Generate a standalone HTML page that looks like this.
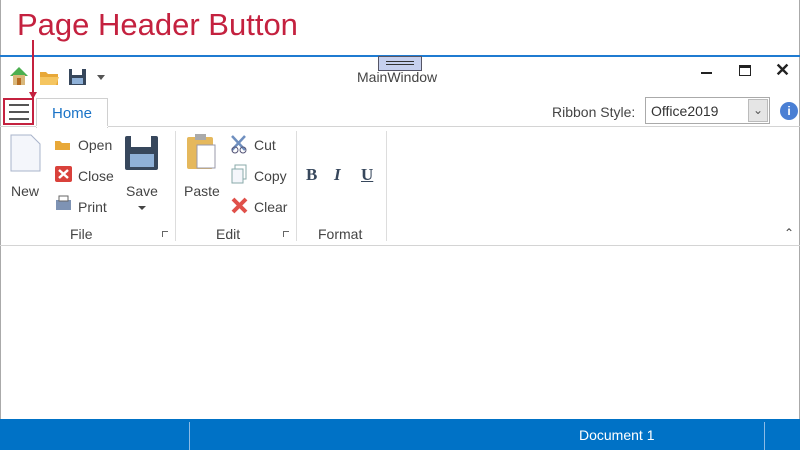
<!DOCTYPE html>
<html><head><style>
*{margin:0;padding:0;box-sizing:border-box}
body{width:800px;height:450px;position:relative;background:#fff;font-family:"Liberation Sans",sans-serif;overflow:hidden;color:#333}
.a{position:absolute}
.t{font-size:14px;color:#444}
</style></head><body>
<div class="a" style="left:0;top:0;width:800px;height:450px;border-left:1px solid #aaa;border-right:1px solid #aaa"></div>
<div class="a" style="left:17px;top:7px;font-size:31px;color:#c4213f">Page Header Button</div>
<div class="a" style="left:0;top:55px;width:800px;height:2px;background:#1f7bd1"></div>
<div class="a" style="left:32px;top:40px;width:2px;height:58px;background:#c4213f"></div>
<div class="a" style="left:29px;top:92px;border-left:4px solid transparent;border-right:4px solid transparent;border-top:7px solid #c4213f"></div>
<div class="a" style="left:378px;top:56px;width:44px;height:15px;background:#c6d0ee;border:1px solid #556"></div>
<div class="a" style="left:386px;top:61px;width:28px;height:1px;background:#333;box-shadow:0 3px 0 #333"></div>
<svg class="a" style="left:8px;top:64px" width="100" height="24">
<path d="M2 12 L11 3 L20 12 Z" fill="#4caf50"/><rect x="5" y="11" width="12" height="10" fill="#d9b77a"/><rect x="9" y="14" width="4" height="7" fill="#b56b20"/>
<path d="M32 8h6l2 2h10v11H32z" fill="#e8a838"/><path d="M32 13h19l-3 8H32z" fill="#f5c560"/>
<rect x="61" y="5" width="17" height="16" fill="#37475c"/><rect x="64" y="5" width="10" height="6" fill="#fff"/><rect x="64" y="14" width="11" height="6" fill="#8fb1d8"/>
<path d="M89 11h8l-4 5z" fill="#555"/>
</svg>
<div class="a" style="left:357px;top:69px;font-size:14px;color:#444">MainWindow</div>
<div class="a" style="left:701px;top:72px;width:11px;height:2px;background:#222"></div>
<div class="a" style="left:739px;top:65px;width:12px;height:11px;border:1.5px solid #222;border-top-width:3px"></div>
<div class="a" style="left:775px;top:60px;font-size:18px;font-weight:bold;color:#222">✕</div>
<div class="a" style="left:3px;top:98px;width:31px;height:27px;border:2px solid #c4213f"></div>
<div class="a" style="left:9px;top:104px;width:20px;height:2px;background:#555;box-shadow:0 7px 0 #555,0 14px 0 #555"></div>
<div class="a" style="left:36px;top:98px;width:72px;height:30px;border:1px solid #d0d0d0;border-bottom:none;background:#fff"></div>
<div class="a" style="left:52px;top:105px;font-size:15px;color:#1a73c7">Home</div>
<div class="a" style="left:0;top:126px;width:800px;height:1px;background:#d4d4d4"></div>
<div class="a" style="left:36px;top:126px;width:72px;height:1px;background:#fff"></div>
<div class="a t" style="left:552px;top:104px">Ribbon Style:</div>
<div class="a" style="left:645px;top:97px;width:125px;height:27px;border:1px solid #aaa"></div>
<div class="a t" style="left:651px;top:103px;color:#333">Office2019</div>
<div class="a" style="left:748px;top:99px;width:20px;height:23px;background:#e5e5e5;border:1px solid #bbb;font-size:12px;text-align:center;line-height:20px;color:#555">⌄</div>
<div class="a" style="left:780px;top:102px;width:18px;height:18px;border-radius:50%;background:#4a7fd4;color:#fff;font-size:12px;font-weight:bold;text-align:center;line-height:18px">i</div>
<svg class="a" style="left:8px;top:132px" width="380" height="90">
<path d="M3 3h20l9 9v27H3z" fill="#f4f6fb" stroke="#a9b4cb"/>
<path d="M47 9h5l2 2h8v7H47z" fill="#e8a838"/>
<rect x="47" y="34" width="17" height="16" rx="2" fill="#d9413b"/><path d="M51 38l9 8M60 38l-9 8" stroke="#fff" stroke-width="2.5"/>
<rect x="48" y="68" width="15" height="10" fill="#7e93b4"/><rect x="51" y="64" width="9" height="5" fill="#fff" stroke="#666"/>
<rect x="117" y="4" width="33" height="34" rx="2" fill="#37475c"/><rect x="123" y="4" width="20" height="11" fill="#fff"/><rect x="122" y="22" width="24" height="13" fill="#8fb1d8"/>
<rect x="179" y="5" width="26" height="32" rx="2" fill="#e5b85c"/><rect x="187" y="2" width="11" height="6" fill="#aaa"/><rect x="189" y="13" width="18" height="23" fill="#fff" stroke="#99a"/>
<path d="M224 4l13 14M237 4l-13 14" stroke="#6f8fbf" stroke-width="2.5"/><circle cx="227" cy="18" r="3" fill="none" stroke="#557"/><circle cx="235" cy="18" r="3" fill="none" stroke="#557"/>
<rect x="227" y="33" width="11" height="14" fill="#fff" stroke="#8aa"/><rect x="224" y="37" width="11" height="14" fill="#f4f6fb" stroke="#8aa"/>
<path d="M225 67l13 13M238 67l-13 13" stroke="#e0504a" stroke-width="4"/>
</svg>
<div class="a t" style="left:11px;top:183px">New</div>
<div class="a t" style="left:78px;top:137px">Open</div>
<div class="a t" style="left:78px;top:168px">Close</div>
<div class="a t" style="left:78px;top:199px">Print</div>
<div class="a t" style="left:126px;top:183px">Save</div>
<div class="a" style="left:138px;top:206px;border-left:4px solid transparent;border-right:4px solid transparent;border-top:4px solid #444"></div>
<div class="a t" style="left:184px;top:183px">Paste</div>
<div class="a t" style="left:254px;top:137px">Cut</div>
<div class="a t" style="left:254px;top:168px">Copy</div>
<div class="a t" style="left:254px;top:199px">Clear</div>
<div class="a" style="left:306px;top:165px;font:bold 17px 'Liberation Serif',serif;color:#37475c">B</div>
<div class="a" style="left:334px;top:165px;font:italic bold 17px 'Liberation Serif',serif;color:#37475c">I</div>
<div class="a" style="left:361px;top:165px;font:bold 17px 'Liberation Serif',serif;color:#37475c;text-decoration:underline">U</div>
<div class="a t" style="left:70px;top:226px">File</div>
<div class="a t" style="left:216px;top:226px">Edit</div>
<div class="a t" style="left:318px;top:226px">Format</div>
<div class="a" style="left:162px;top:231px;width:6px;height:6px;border-left:1px solid #666;border-top:1px solid #666"></div>
<div class="a" style="left:283px;top:231px;width:6px;height:6px;border-left:1px solid #666;border-top:1px solid #666"></div>
<div class="a" style="left:175px;top:131px;width:1px;height:110px;background:#ddd"></div>
<div class="a" style="left:296px;top:131px;width:1px;height:110px;background:#ddd"></div>
<div class="a" style="left:386px;top:131px;width:1px;height:110px;background:#ddd"></div>
<div class="a" style="left:784px;top:226px;font-size:12px;color:#444">⌃</div>
<div class="a" style="left:0;top:245px;width:800px;height:1px;background:#d4d4d4"></div>
<div class="a" style="left:0;top:419px;width:800px;height:31px;background:#0072c6"></div>
<div class="a" style="left:189px;top:422px;width:1px;height:28px;background:#8bbbe6"></div>
<div class="a" style="left:764px;top:422px;width:1px;height:28px;background:#8bbbe6"></div>
<div class="a" style="left:579px;top:427px;font-size:14px;color:#fff">Document 1</div>
</body></html>
